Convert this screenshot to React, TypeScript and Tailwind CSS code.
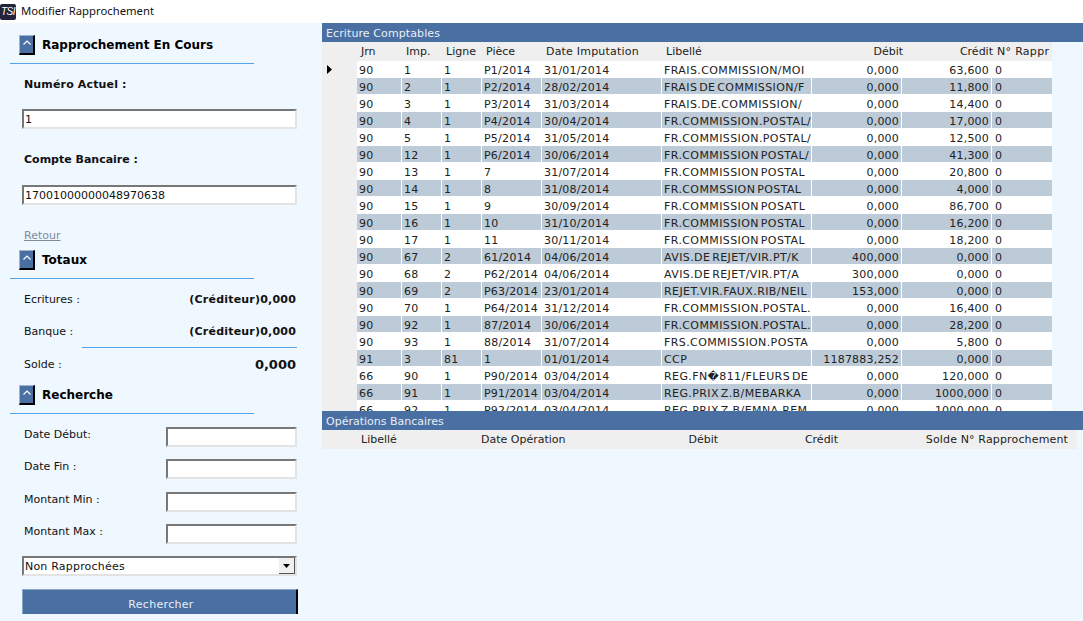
const font = "font-['DejaVu_Sans',sans-serif]";

const ecritures = [
  ["90", "1", "1", "P1/2014", "31/01/2014", "FRAIS.COMMISSION/MOI", "0,000", "63,600"],
  ["90", "2", "1", "P2/2014", "28/02/2014", "FRAIS DE COMMISSION/F", "0,000", "11,800"],
  ["90", "3", "1", "P3/2014", "31/03/2014", "FRAIS.DE.COMMISSION/", "0,000", "14,400"],
  ["90", "4", "1", "P4/2014", "30/04/2014", "FR.COMMISSION.POSTAL/", "0,000", "17,000"],
  ["90", "5", "1", "P5/2014", "31/05/2014", "FR.COMMISSION.POSTAL/", "0,000", "12,500"],
  ["90", "12", "1", "P6/2014", "30/06/2014", "FR.COMMISSION POSTAL/", "0,000", "41,300"],
  ["90", "13", "1", "7", "31/07/2014", "FR.COMMISSION POSTAL", "0,000", "20,800"],
  ["90", "14", "1", "8", "31/08/2014", "FR.COMMSSION POSTAL", "0,000", "4,000"],
  ["90", "15", "1", "9", "30/09/2014", "FR.COMMISSION POSATL", "0,000", "86,700"],
  ["90", "16", "1", "10", "31/10/2014", "FR.COMMISSION POSTAL", "0,000", "16,200"],
  ["90", "17", "1", "11", "30/11/2014", "FR.COMMISSION POSTAL", "0,000", "18,200"],
  ["90", "67", "2", "61/2014", "04/06/2014", "AVIS.DE REJET/VIR.PT/K", "400,000", "0,000"],
  ["90", "68", "2", "P62/2014", "04/06/2014", "AVIS.DE REJET/VIR.PT/A", "300,000", "0,000"],
  ["90", "69", "2", "P63/2014", "23/01/2014", "REJET.VIR.FAUX.RIB/NEIL", "153,000", "0,000"],
  ["90", "70", "1", "P64/2014", "31/12/2014", "FR.COMMISSION.POSTAL.", "0,000", "16,400"],
  ["90", "92", "1", "87/2014", "30/06/2014", "FR.COMMISSION.POSTAL.", "0,000", "28,200"],
  ["90", "93", "1", "88/2014", "31/07/2014", "FRS.COMMISSION.POSTA", "0,000", "5,800"],
  ["91", "3", "81", "1", "01/01/2014", "CCP", "1187883,252", "0,000"],
  ["66", "90", "1", "P90/2014", "03/04/2014", "REG.FN\uFFFD811/FLEURS DE", "0,000", "120,000"],
  ["66", "91", "1", "P91/2014", "03/04/2014", "REG.PRIX Z.B/MEBARKA", "0,000", "1000,000"],
  ["66", "92", "1", "P92/2014", "03/04/2014", "REG.PRIX Z.B/EMNA.REM", "0,000", "1000,000"],
];

const gridCols = "grid grid-cols-[45px_40px_40px_60px_120px_150px_90px_90px_59px]";

function SectionHead({ title }: { title: string }) {
  return (
    <div className="ml-[10px] w-[244px] h-[29px] border-b border-[#55a5ec] pl-[9px] flex items-start gap-[7px]">
      <button className="w-[16px] h-[20px] bg-[#4a70a3] border-t border-l border-[#9db4d0] border-r-2 border-b-2 border-r-black border-b-black flex items-start justify-center pt-[3px]">
        <svg width="10" height="7" viewBox="0 0 10 7" fill="none" stroke="#fff" strokeWidth="1.2">
          <path d="M1.5 5.5 L5 2 L8.5 5.5" />
        </svg>
      </button>
      <span className="text-[12px] leading-[20px] font-bold text-black">{title}</span>
    </div>
  );
}

function Field({ value = "", className = "" }: { value?: string; className?: string }) {
  return (
    <div className={`h-[20px] bg-white border-t-2 border-l-2 border-t-[#777] border-l-[#777] border-r-2 border-b-2 border-r-[#e3e3e3] border-b-[#e3e3e3] text-[11px] leading-[18px] text-[#111] pl-px ${className}`}>
      {value}
    </div>
  );
}

function SearchRow({ label, top }: { label: string; top: string }) {
  return (
    <div className={`flex justify-between items-start pl-[24px] pr-[25px] ${top}`}>
      <span className="text-[11px] leading-[14px] pt-px text-[#111]">{label}</span>
      <Field className="w-[131px]" />
    </div>
  );
}

export default function App() {
  return (
    <div className={`w-[1083px] h-[621px] overflow-hidden bg-[#eff7ff] ${font}`}>
      {/* title bar */}
      <div className="h-[23px] bg-white flex items-center gap-[5px]">
        <div className="w-[16px] h-[16px] bg-[#23233a] rounded-[2px] text-white text-[10px] leading-[16px] italic text-center tracking-[-0.5px] overflow-hidden font-['Liberation_Sans',sans-serif]">
          TSI
        </div>
        <span className="text-[11.3px] text-[#111] font-['Noto_Sans',sans-serif]">Modifier Rapprochement</span>
      </div>

      <div className="flex h-[598px]">
        {/* left panel */}
        <div className="w-[322px] shrink-0 pt-[12px]">
          <SectionHead title="Rapprochement En Cours" />
          <div className="pl-[24px] mt-[14px] text-[11px] leading-[14px] font-bold tracking-[0.15px] text-[#111]">Numéro Actuel :</div>
          <div className="pl-[22px] pr-[25px] mt-[17px]"><Field value="1" /></div>
          <div className="pl-[24px] mt-[24px] text-[11px] leading-[14px] font-bold text-[#111]">Compte Bancaire :</div>
          <div className="pl-[22px] pr-[25px] mt-[18px]"><Field value="17001000000048970638" /></div>
          <div className="pl-[24px] mt-[24px] text-[11px] leading-[14px] text-[#7d8b99] underline">Retour</div>

          <div className="mt-[7px]"><SectionHead title="Totaux" /></div>
          <div className="flex justify-between pl-[24px] pr-[26px] mt-[14px] text-[11px] leading-[14px] text-[#111]">
            <span>Ecritures :</span>
            <span className="font-bold tracking-[0.2px]">(Créditeur)0,000</span>
          </div>
          <div className="flex justify-between pl-[24px] pr-[26px] mt-[18px] text-[11px] leading-[14px] text-[#111]">
            <span>Banque :</span>
            <span className="font-bold tracking-[0.2px]">(Créditeur)0,000</span>
          </div>
          <div className="ml-[82px] w-[215px] mt-[8px] border-t border-[#55a5ec]" />
          <div className="flex justify-between items-center pl-[24px] pr-[26px] mt-[9px] text-[#111]">
            <span className="text-[11px] leading-[14px]">Solde :</span>
            <span className="text-[13px] leading-[16px] font-bold">0,000</span>
          </div>

          <div className="mt-[12px]"><SectionHead title="Recherche" /></div>
          <SearchRow label="Date Début:" top="mt-[13px]" />
          <SearchRow label="Date Fin :" top="mt-[12px]" />
          <SearchRow label="Montant Min :" top="mt-[13px]" />
          <SearchRow label="Montant Max :" top="mt-[12px]" />

          <div className="ml-[22px] w-[275px] h-[20px] mt-[12px] bg-white border-t-2 border-l-2 border-t-[#777] border-l-[#777] border-r-2 border-b-2 border-r-[#e3e3e3] border-b-[#e3e3e3] text-[11px] leading-[18px] text-[#111] pl-[1px] flex justify-between">
            <span className="tracking-[0.2px]">Non Rapprochées</span>
            <div className="w-[16px] h-[16px] bg-[#f0f0f0] border-r border-b border-[#555] flex items-center justify-center">
              <svg width="7" height="4" viewBox="0 0 7 4"><path d="M0 0 H7 L3.5 4 Z" fill="#000" /></svg>
            </div>
          </div>
          <button className="block ml-[22px] w-[276px] h-[25px] mt-[13px] pl-[3px] bg-[#4a70a3] border-t border-l border-[#8aa6ca] border-r-2 border-r-black text-[11px] leading-[29px] tracking-[0.3px] text-[#e8eef6] text-center">
            Rechercher
          </button>
        </div>

        {/* right panel */}
        <div className="flex-1 min-w-0">
          <div className="h-[19px] bg-[#4a70a3] text-[#e8eef6] text-[11px] leading-[21px] tracking-[0.1px] pl-[4px]">Ecriture Comptables</div>
          <div className="h-[369px] overflow-hidden">
            <div className="w-[730px] h-[19px] bg-[#efefef] pl-[35px] text-[11px] leading-[19px] text-[#222]">
              <div className={gridCols}>
                <span className="pl-[4px]">Jrn</span>
                <span className="pl-[4px]">Imp.</span>
                <span className="pl-[4px]">Ligne</span>
                <span className="pl-[4px]">Pièce</span>
                <span className="pl-[4px] tracking-[0.2px]">Date Imputation</span>
                <span className="pl-[4px]">Libellé</span>
                <span className="text-right -mr-px">Débit</span>
                <span className="text-right -mr-px">Crédit</span>
                <span className="pl-[5px] tracking-[0.3px] whitespace-nowrap">N° Rappr</span>
              </div>
            </div>
            <div className="w-[730px] bg-[#efefef] pl-[35px] relative">
              <svg className="absolute left-[5px] top-[4px]" width="5" height="9" viewBox="0 0 5 9"><path d="M0 0 L5 4.5 L0 9 Z" fill="#000" /></svg>
              {ecritures.map((row, i) => (
                <div key={i} className={`${gridCols} grid-rows-[16px] h-[17px] text-[11px] leading-[20px] text-[#222] border-b border-white ${i % 2 ? "bg-[#bdcad8]" : "bg-white"}`}>
                  {row.map((cell, j) => (
                    <span
                      key={j}
                      className={`overflow-hidden whitespace-nowrap border-r border-white ${j === 6 || j === 7 ? "text-right pr-[2px] tracking-[0.2px]" : "pl-[2px]"} ${j === 5 ? "tracking-[0.4px] [word-spacing:-2px]" : "tracking-[0.2px]"}`}
                    >
                      {cell}
                    </span>
                  ))}
                  <span className="pl-[3px]">0</span>
                </div>
              ))}
            </div>
          </div>
          <div className="h-[19px] bg-[#4a70a3] text-[#e8eef6] text-[11px] leading-[21px] pl-[4px]">Opérations Bancaires</div>
          <div className="w-[755px] h-[19px] bg-[#efefef] pl-[39px] flex text-[11px] leading-[19px] text-[#222]">
            <span className="w-[120px]">Libellé</span>
            <span className="w-[120px]">Date Opération</span>
            <span className="w-[117px] text-right">Débit</span>
            <span className="w-[120px] text-right">Crédit</span>
            <span className="flex-1 text-right pr-[9px] tracking-[0.15px] whitespace-nowrap">Solde N° Rapprochement</span>
          </div>
        </div>
      </div>
    </div>
  );
}
